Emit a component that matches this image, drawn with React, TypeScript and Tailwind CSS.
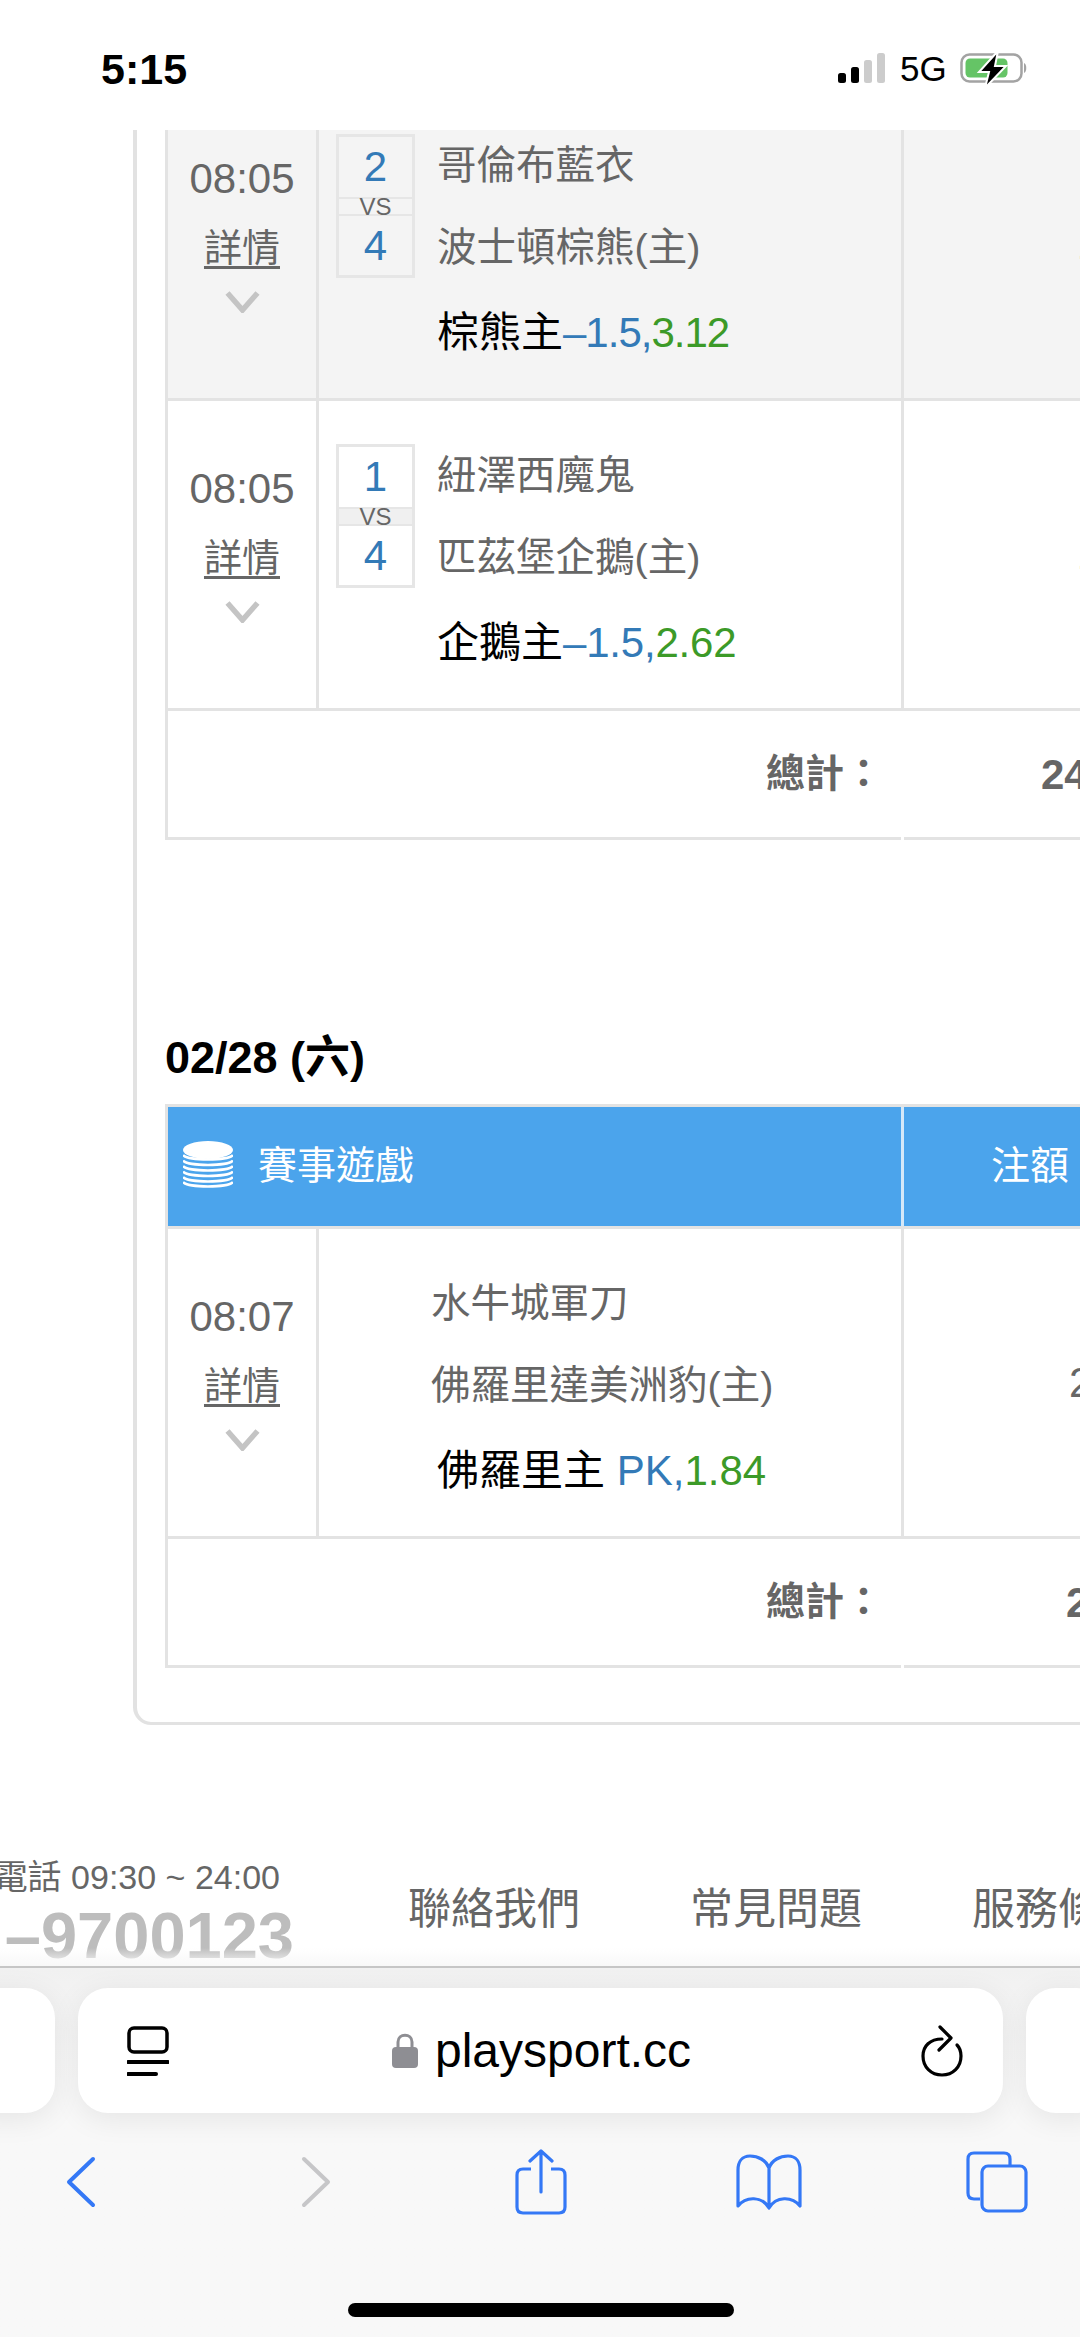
import React from 'react';

const Chevron = () => (
  <svg width="35" height="22" viewBox="0 0 35 22" fill="none" className="mx-auto">
    <path d="M2.5 2 L17.5 19 L32.5 2" stroke="#c4c4c4" strokeWidth="5.5" />
  </svg>
);

const TimeCell = ({ time }: { time: string }) => (
  <div className="w-[151px] shrink-0 border-r-[3px] border-[#e3e3e3] pt-[63px] text-center text-[#666]">
    <div className="h-[50px] text-[42px] leading-[50px]">{time}</div>
    <div className="mt-[19px] h-[50px] text-[38px] leading-[50px] underline underline-offset-[5px]">詳情</div>
    <div className="mt-[18px]">
      <Chevron />
    </div>
  </div>
);

const ScoreBox = ({ a, b, vsBg }: { a: string; b: string; vsBg: string }) => (
  <div className="mt-[43px] h-[144px] w-[79px] shrink-0 border-[3px] border-[#e6e6e6] text-center">
    <div className="h-[60px] text-[42px] leading-[60px] text-[#337ab7]">{a}</div>
    <div className={`h-[19px] border-y-[2px] border-[#e6e6e6] text-[24px] leading-[15px] text-[#666] ${vsBg}`}>VS</div>
    <div className="h-[59px] text-[42px] leading-[59px] text-[#337ab7]">{b}</div>
  </div>
);

type RowProps = {
  time: string;
  home: string;
  away: string;
  pick: string;
  line: string;
  odds: string;
  amount: string;
  indent: string;
  tracking?: string;
  score?: [string, string];
  striped?: boolean;
};

const GameRow = ({ time, home, away, pick, line, odds, amount, indent, tracking, score, striped }: RowProps) => (
  <div className={`flex h-[310px] border-b-[3px] border-l-[3px] border-[#e3e3e3] ${striped ? 'bg-[#f4f4f4]' : 'bg-white'}`}>
    <TimeCell time={time} />
    <div className="flex w-[585px] shrink-0 border-r-[3px] border-[#e3e3e3] pl-[17px]">
      {score ? <ScoreBox a={score[0]} b={score[1]} vsBg={striped ? 'bg-[#f4f4f4]' : 'bg-[#f0f0f0]'} /> : <div className="w-[79px] shrink-0" />}
      <div className={`pt-[33px] ${score ? 'pl-[22px]' : 'pl-[16px]'}`}>
        <div className="h-[82px] whitespace-nowrap text-[39.5px] leading-[82px] text-[#666]">{home}</div>
        <div className="h-[82px] whitespace-nowrap text-[39.5px] leading-[82px] text-[#666]">{away}</div>
        <div className={`h-[84px] whitespace-nowrap text-[42px] leading-[90px] text-black ${score ? '' : 'pl-[6px]'}`}>
          {pick}
          <span className={tracking}>
            <span className="text-[#337ab7]">{line}</span>
            <span className="text-[#3c9a28]">{odds}</span>
          </span>
        </div>
      </div>
    </div>
    <div className={`flex w-[300px] shrink-0 items-center text-[42px] text-[#666] ${indent}`}>{amount}</div>
  </div>
);

const TotalRow = ({ amount, left }: { amount: string; left: string }) => (
  <div className="flex h-[129px]">
    <div className="flex w-[736px] shrink-0 items-center justify-end border-b-[3px] border-l-[3px] border-[#e3e3e3] pr-[18px] text-[39px] font-bold text-[#666]">總計：</div>
    <div className={`ml-[3px] flex w-[300px] shrink-0 items-center border-b-[3px] border-[#e3e3e3] text-[42px] font-bold text-[#666] ${left}`}>{amount}</div>
  </div>
);

const CoinStack = () => (
  <svg width="50" height="48" viewBox="0 0 50 48" fill="none" className="-mt-[3px]">
    <ellipse cx="25" cy="9" rx="25" ry="9" fill="white" />
    <path d="M0 14 C4 20 46 20 50 14 M0 19.500 C4 25.500 46 25.500 50 19.500 M0 25 C4 31 46 31 50 25 M0 30.500 C4 36.500 46 36.500 50 30.500 M0 36 C4 42 46 42 50 36 M0 41 C4 47 46 47 50 41" stroke="white" strokeWidth="2.600" />
  </svg>
);

const StatusBar = () => (
  <div className="flex h-[130px] shrink-0 items-start bg-white">
    <div className="ml-[101px] mt-[43px] text-[43px] font-bold leading-[52px] text-black">5:15</div>
    <div className="ml-auto mr-[52px] mt-[53px] flex items-start">
      <svg width="47" height="30" viewBox="0 0 47 30">
        <rect x="0" y="20" width="8" height="10" rx="2.500" fill="black" />
        <rect x="13" y="14" width="8" height="16" rx="2.500" fill="black" />
        <rect x="26" y="7" width="8" height="23" rx="2.500" fill="#cccccc" />
        <rect x="39" y="0" width="8" height="30" rx="2.500" fill="#cccccc" />
      </svg>
      <div className="ml-[15px] w-[60px] text-[35px] leading-[32px] text-black">5G</div>
      <svg width="68" height="42" viewBox="0 0 68 42" className="-mt-[5px]">
        <rect x="1.500" y="6.500" width="60" height="27" rx="8" fill="none" stroke="#a3a3a3" strokeWidth="2.500" />
        <rect x="5.500" y="10.500" width="42" height="19" rx="4.500" fill="#65c466" />
        <path d="M64 15 C67 16 67 24 64 25 Z" fill="#a3a3a3" />
        <path d="M38 3 L19 24 L29 24 L25 40 L46 18 L35 18 Z" fill="black" stroke="white" strokeWidth="2" />
      </svg>
    </div>
  </div>
);

const Footer = () => (
  <div className="mt-[132px] flex h-[120px] text-[#666]">
    <div className="flex w-[294px] shrink-0 flex-col items-end overflow-hidden">
      <div className="h-[40px] whitespace-nowrap pr-[14px] text-[34px] leading-[40px]">電話 09:30 ~ 24:00</div>
      <div className="mt-[3px] whitespace-nowrap text-[65px] font-bold leading-[72px] text-[#bdbdbd]">–9700123</div>
    </div>
    <div className="ml-[114px] mt-[26px] flex shrink-0 gap-[110px] whitespace-nowrap text-[43px] leading-[52px]">
      <span>聯絡我們</span>
      <span>常見問題</span>
      <span>服務條款</span>
    </div>
  </div>
);

const UrlBar = () => (
  <div className="mt-[20px] flex h-[125px] items-stretch gap-[23px]">
    <div className="-ml-[40px] w-[95px] shrink-0 rounded-[30px] bg-white shadow-[0_6px_30px_rgba(0,0,0,0.08)]" />
    <div className="flex w-[925px] shrink-0 items-center rounded-[30px] bg-white pl-[49px] shadow-[0_6px_30px_rgba(0,0,0,0.08)]">
      <svg width="42" height="50" viewBox="0 0 42 50" fill="none" className="shrink-0">
        <rect x="2" y="2" width="38" height="24" rx="5" stroke="black" strokeWidth="3.500" />
        <path d="M1 36 H41" stroke="black" strokeWidth="4" strokeLinecap="round" />
        <path d="M1 48 H29" stroke="black" strokeWidth="4" strokeLinecap="round" />
      </svg>
      <svg width="26" height="36" viewBox="0 0 26 36" fill="none" className="ml-[223px] shrink-0">
        <path d="M6 15 V9 C6 0 20 0 20 9 V15" stroke="#8e8e93" strokeWidth="3" />
        <rect x="0" y="14" width="26" height="21" rx="4" fill="#8e8e93" />
      </svg>
      <div className="ml-[17px] text-[48px] leading-[60px] text-black">playsport.cc</div>
      <svg width="42" height="52" viewBox="0 0 42 52" fill="none" className="ml-[230px] shrink-0">
        <path d="M21 14 C9 14 2 21 2 31 C2 42 10 50 21 50 C32 50 40 42 40 31 C40 26 38 22 36 20" stroke="black" strokeWidth="3.200" strokeLinecap="round" />
        <path d="M19 2 L30 13 L18 25" stroke="black" strokeWidth="3.200" strokeLinecap="round" strokeLinejoin="round" />
      </svg>
    </div>
    <div className="w-[80px] shrink-0 rounded-[30px] bg-white shadow-[0_6px_30px_rgba(0,0,0,0.08)]" />
  </div>
);

const NavIcons = () => (
  <div className="mt-[36px] flex h-[66px] items-center pl-[66px]">
    <svg width="30" height="52" viewBox="0 0 30 52" fill="none">
      <path d="M27 3 L3 26 L27 49" stroke="#3478f6" strokeWidth="4" strokeLinecap="round" strokeLinejoin="round" />
    </svg>
    <svg width="30" height="52" viewBox="0 0 30 52" fill="none" className="ml-[205px]">
      <path d="M3 3 L27 26 L3 49" stroke="#c6c6c8" strokeWidth="4" strokeLinecap="round" strokeLinejoin="round" />
    </svg>
    <svg width="52" height="66" viewBox="0 0 52 66" fill="none" className="ml-[184px]">
      <path d="M26 2 V43 M15 12 L26 2 L37 12" stroke="#3478f6" strokeWidth="3.200" strokeLinecap="round" strokeLinejoin="round" />
      <path d="M16 20 H8 C4 20 2 22 2 26 V58 C2 62 4 64 8 64 H44 C48 64 50 62 50 58 V26 C50 22 48 20 44 20 H36" stroke="#3478f6" strokeWidth="3.200" />
    </svg>
    <svg width="66" height="56" viewBox="0 0 66 56" fill="none" className="ml-[169px]">
      <path d="M33 14 C30 6 22 2 14 2 C6 2 2 8 2 16 V52 C10 42 26 42 33 54 C40 42 56 42 64 52 V16 C64 8 60 2 52 2 C44 2 36 6 33 14 Z M33 14 V54" stroke="#3478f6" strokeWidth="3.200" strokeLinejoin="round" />
    </svg>
    <svg width="62" height="62" viewBox="0 0 62 62" fill="none" className="ml-[164px]">
      <path d="M14 48 H8 C4 48 2 46 2 42 V8 C2 4 4 2 8 2 H38 C42 2 44 4 44 8 V14" stroke="#3478f6" strokeWidth="3.200" />
      <rect x="16" y="15" width="44" height="45" rx="6" stroke="#3478f6" strokeWidth="3.200" />
    </svg>
  </div>
);

export default function App() {
  return (
    <div className="flex h-[2337px] w-[1080px] flex-col overflow-hidden bg-white font-['Liberation_Sans','Noto_Sans_CJK_TC',sans-serif] font-normal">
      <StatusBar />

      {/* Page scrolled under the status bar */}
      <div className="relative h-[1836px] shrink-0 overflow-hidden">
        <div className="-mt-[39px]">
          <div className="ml-[133px] rounded-bl-[18px] border-b-[3px] border-l-[4px] border-[#e2e2e2] pb-[54px] pl-[28px]">
            <GameRow
              time="08:05"
              home="哥倫布藍衣"
              away="波士頓棕熊(主)"
              pick="棕熊主"
              line="–1.5,"
              odds="3.12"
              amount="1"
              indent="pl-[173px]"
              tracking="tracking-[-1px]"
              score={['2', '4']}
              striped
            />
            <GameRow
              time="08:05"
              home="紐澤西魔鬼"
              away="匹茲堡企鵝(主)"
              pick="企鵝主"
              line="–1.5,"
              odds="2.62"
              amount="1"
              indent="pl-[173px]"
              tracking="tracking-[-0.2px]"
              score={['1', '4']}
            />
            <TotalRow amount="24" left="pl-[137px]" />

            <div className="mt-[192px] h-[52px] text-[45px] font-bold leading-[52px] text-black">02/28 (六)</div>

            <div className="mt-[20px] flex h-[125px] border-y-[3px] border-l-[3px] border-[#e3e3e3] text-[39px] text-white">
              <div className="flex w-[736px] shrink-0 items-center gap-[25px] border-r-[3px] border-[#d5e8f8] bg-[#4ba4ec] pl-[15px]">
                <CoinStack />
                <span>賽事遊戲</span>
              </div>
              <div className="flex w-[300px] shrink-0 items-center bg-[#4ba4ec] pl-[87px]">注額</div>
            </div>

            <GameRow
              time="08:07"
              home="水牛城軍刀"
              away="佛羅里達美洲豹(主)"
              pick="佛羅里主 "
              line="PK,"
              odds="1.84"
              amount="2"
              indent="pl-[165px]"
            />
            <TotalRow amount="2" left="pl-[162px]" />
          </div>

          <Footer />
        </div>
        <div className="absolute inset-x-0 bottom-0 h-[18px] bg-linear-to-b from-transparent to-[#f8f8f8]" />
      </div>

      {/* Safari toolbar */}
      <div className="min-h-0 flex-1 border-t-[2px] border-[#c6c6c6] bg-linear-to-b from-[#f1f1f1] to-[#f8f8f8] to-30%">
        <UrlBar />
        <NavIcons />
        <div className="ml-[348px] mt-[88px] h-[14px] w-[386px] rounded-full bg-black" />
      </div>
    </div>
  );
}
